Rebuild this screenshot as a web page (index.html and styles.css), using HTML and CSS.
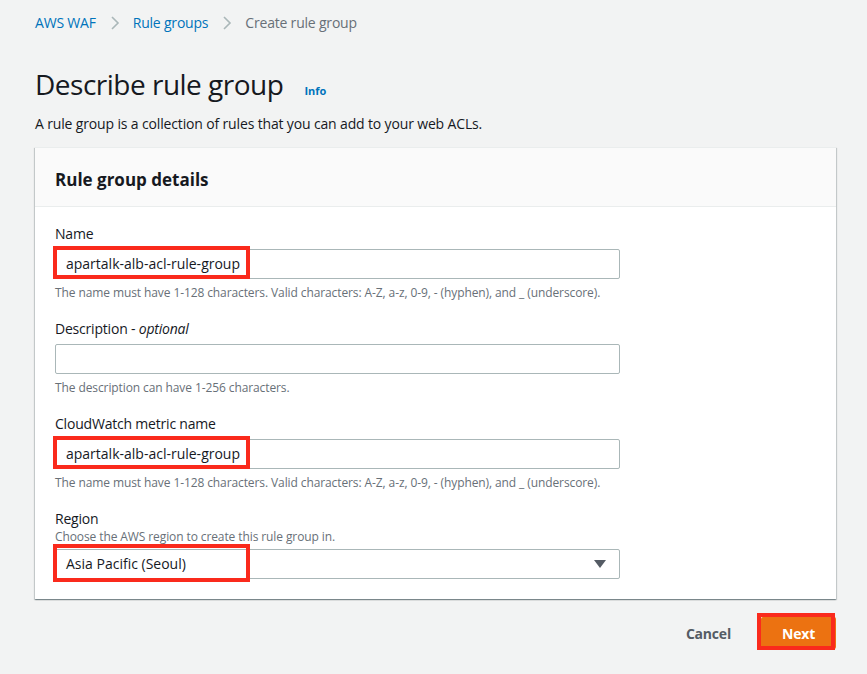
FILE: index.html
```html
<!DOCTYPE html>
<html>
<head>
<meta charset="utf-8">
<link rel="stylesheet" href="styles.css">
</head>
<body>
<div class="page">
  <nav class="crumbs">
    <a class="crumb-link">AWS WAF</a>
    <svg class="chev" width="10" height="14" viewBox="0 0 10 14"><path d="M2 1l6 6-6 6" fill="none" stroke="#aab7b8" stroke-width="1.6"/></svg>
    <a class="crumb-link">Rule groups</a>
    <svg class="chev" width="10" height="14" viewBox="0 0 10 14"><path d="M2 1l6 6-6 6" fill="none" stroke="#aab7b8" stroke-width="1.6"/></svg>
    <span class="crumb-current">Create rule group</span>
  </nav>

  <div class="title-row">
    <h1 class="title">Describe rule group</h1>
    <a class="info">Info</a>
  </div>
  <p class="intro">A rule group is a collection of rules that you can add to your web ACLs.</p>

  <section class="panel">
    <header class="panel-head">
      <h2 class="panel-title">Rule group details</h2>
    </header>
    <div class="panel-body">
      <div class="field">
        <div class="label">Name</div>
        <div class="control">
          <div class="input">apartalk-alb-acl-rule-group</div>
          <div class="mark mark-name"></div>
        </div>
        <div class="help">The name must have 1-128 characters. Valid characters: A-Z, a-z, 0-9, - (hyphen), and _ (underscore).</div>
      </div>
      <div class="field">
        <div class="label">Description - <i>optional</i></div>
        <div class="control">
          <div class="input"></div>
        </div>
        <div class="help">The description can have 1-256 characters.</div>
      </div>
      <div class="field">
        <div class="label">CloudWatch metric name</div>
        <div class="control">
          <div class="input">apartalk-alb-acl-rule-group</div>
          <div class="mark mark-name"></div>
        </div>
        <div class="help">The name must have 1-128 characters. Valid characters: A-Z, a-z, 0-9, - (hyphen), and _ (underscore).</div>
      </div>
      <div class="field field-last">
        <div class="label">Region</div>
        <div class="desc">Choose the AWS region to create this rule group in.</div>
        <div class="control control-select">
          <div class="input select">
            <span>Asia Pacific (Seoul)</span>
            <svg class="caret" width="12" height="8" viewBox="0 0 12 8"><path d="M0 0h12L6 8z" fill="#545b64"/></svg>
          </div>
          <div class="mark mark-region"></div>
        </div>
      </div>
    </div>
  </section>

  <div class="actions">
    <button class="btn-cancel">Cancel</button>
    <div class="next-wrap">
      <button class="btn-next">Next</button>
      <div class="mark mark-next"></div>
    </div>
  </div>
</div>
</body>
</html>
```

FILE: styles.css
```css
* { box-sizing: border-box; }
html, body { margin: 0; padding: 0; }
body {
  background: #f2f3f3;
  font-family: "Open Sans", "Noto Sans", sans-serif;
  color: #16191f;
  width: 867px;
  height: 674px;
  overflow: hidden;
}
.page {
  padding: 13px 31px 0 35px;
}
.crumbs {
  display: flex;
  align-items: center;
  height: 20px;
  font-size: 14px;
  line-height: 20px;
  letter-spacing: -0.2px;
}
.crumb-link { color: #0073bb; }
.crumb-current { color: #687078; }
.chev { margin: 0 13px 0 14px; }
.title-row {
  display: flex;
  align-items: baseline;
  margin-top: 33px;
  height: 36px;
}
.title {
  margin: 0;
  font-size: 28px;
  line-height: 36px;
  font-weight: 400;
  letter-spacing: -0.5px;
}
.info {
  margin-left: 21px;
  font-size: 11px;
  font-weight: 700;
  color: #0073bb;
}
.intro {
  margin: 12px 0 0 0;
  font-size: 14px;
  line-height: 20px;
  color: #16191f;
  letter-spacing: -0.15px;
}
.panel {
  margin-top: 13px;
  width: 801px;
  background: #fff;
  border-top: 1px solid #eaeded;
  box-shadow: 0 1px 1px 0 rgba(0, 28, 36, 0.3), 1px 1px 1px 0 rgba(0, 28, 36, 0.15), -1px 1px 1px 0 rgba(0, 28, 36, 0.15);
}
.panel-head {
  height: 59px;
  background: #fafafa;
  border-bottom: 1px solid #eaeded;
  padding: 5px 20px 0 20px;
  display: flex;
  align-items: center;
}
.panel-title {
  margin: 0;
  font-size: 17px;
  font-weight: 700;
  line-height: 22px;
}
.panel-body {
  padding: 17px 20px 20px 20px;
}
.field { margin-bottom: 18px; }
.field-last { margin-bottom: 0; }
.label {
  font-size: 14px;
  line-height: 20px;
  letter-spacing: -0.2px;
  margin-bottom: 5px;
}
.field-last .label { margin-bottom: 0; }
.desc {
  font-size: 12px;
  line-height: 16px;
  color: #687078;
  margin-bottom: 4px;
  letter-spacing: -0.1px;
}
.control {
  position: relative;
  width: 565px;
}
.input {
  height: 30px;
  border: 1px solid #aab7b8;
  border-radius: 2px;
  background: #fff;
  padding: 0 10px;
  font-size: 14px;
  line-height: 28px;
  color: #16191f;
}
.select {
  display: flex;
  align-items: center;
  justify-content: space-between;
  padding-right: 13px;
}
.caret { display: block; }
.help {
  margin-top: 6px;
  font-size: 12px;
  line-height: 16px;
  color: #687078;
  letter-spacing: -0.1px;
}
.mark {
  position: absolute;
  border: 4px solid #fa2a1c;
  pointer-events: none;
}
.mark-name {
  left: -2px;
  top: -3px;
  width: 197px;
  height: 33px;
}
.mark-region {
  left: -2px;
  top: -5px;
  width: 197px;
  height: 38px;
}
.actions {
  width: 801px;
  display: flex;
  justify-content: flex-end;
  align-items: center;
  margin-top: 18px;
}
.btn-cancel {
  background: none;
  border: none;
  font-family: inherit;
  font-size: 14px;
  font-weight: 700;
  color: #545b64;
  padding: 0;
  margin-right: 30px;
  letter-spacing: -0.2px;
}
.next-wrap { position: relative; }
.btn-next {
  display: block;
  width: 75px;
  height: 32px;
  background: #ec7211;
  border: none;
  border-radius: 2px;
  color: #fff;
  font-family: inherit;
  font-size: 14px;
  font-weight: 700;
  letter-spacing: -0.2px;
  padding: 0;
}
.mark-next {
  left: -4px;
  top: -4px;
  width: 78px;
  height: 37px;
}
```
